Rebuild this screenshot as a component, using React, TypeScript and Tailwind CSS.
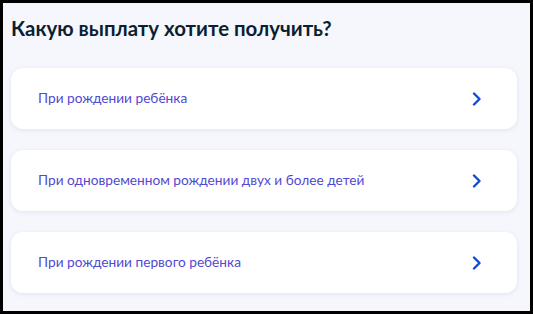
const options = [
  'При рождении ребёнка',
  'При одновременном рождении двух и более детей',
  'При рождении первого ребёнка',
];

function Chevron() {
  return (
    <svg width="12" height="14" viewBox="0 0 12 14" fill="none">
      <path d="M3 1.5 L8.5 7 L3 12.5" stroke="#0d4cd3" strokeWidth="2.4" strokeLinecap="round" strokeLinejoin="round" />
    </svg>
  );
}

export default function App() {
  return (
    <div className="w-[533px] h-[314px] overflow-hidden border-[3px] border-black bg-[#f5f7fc] pl-[8px] pr-[13px] pt-[11px] font-['Lato','Inter',sans-serif]">
      <h1 className="text-[20.4px] leading-[28px] font-bold text-[#0b1f33]">Какую выплату хотите получить?</h1>
      <div className="mt-[26px] flex flex-col gap-[21px]">
        {options.map((label) => (
          <div
            key={label}
            className="h-[61px] rounded-[12px] bg-white shadow-[0_1px_4px_rgba(150,170,210,0.25)] flex items-center justify-between pl-[27px] pr-[34px]"
          >
            <span className="text-[13.7px] text-[#5249d0]">{label}</span>
            <Chevron />
          </div>
        ))}
      </div>
    </div>
  );
}
